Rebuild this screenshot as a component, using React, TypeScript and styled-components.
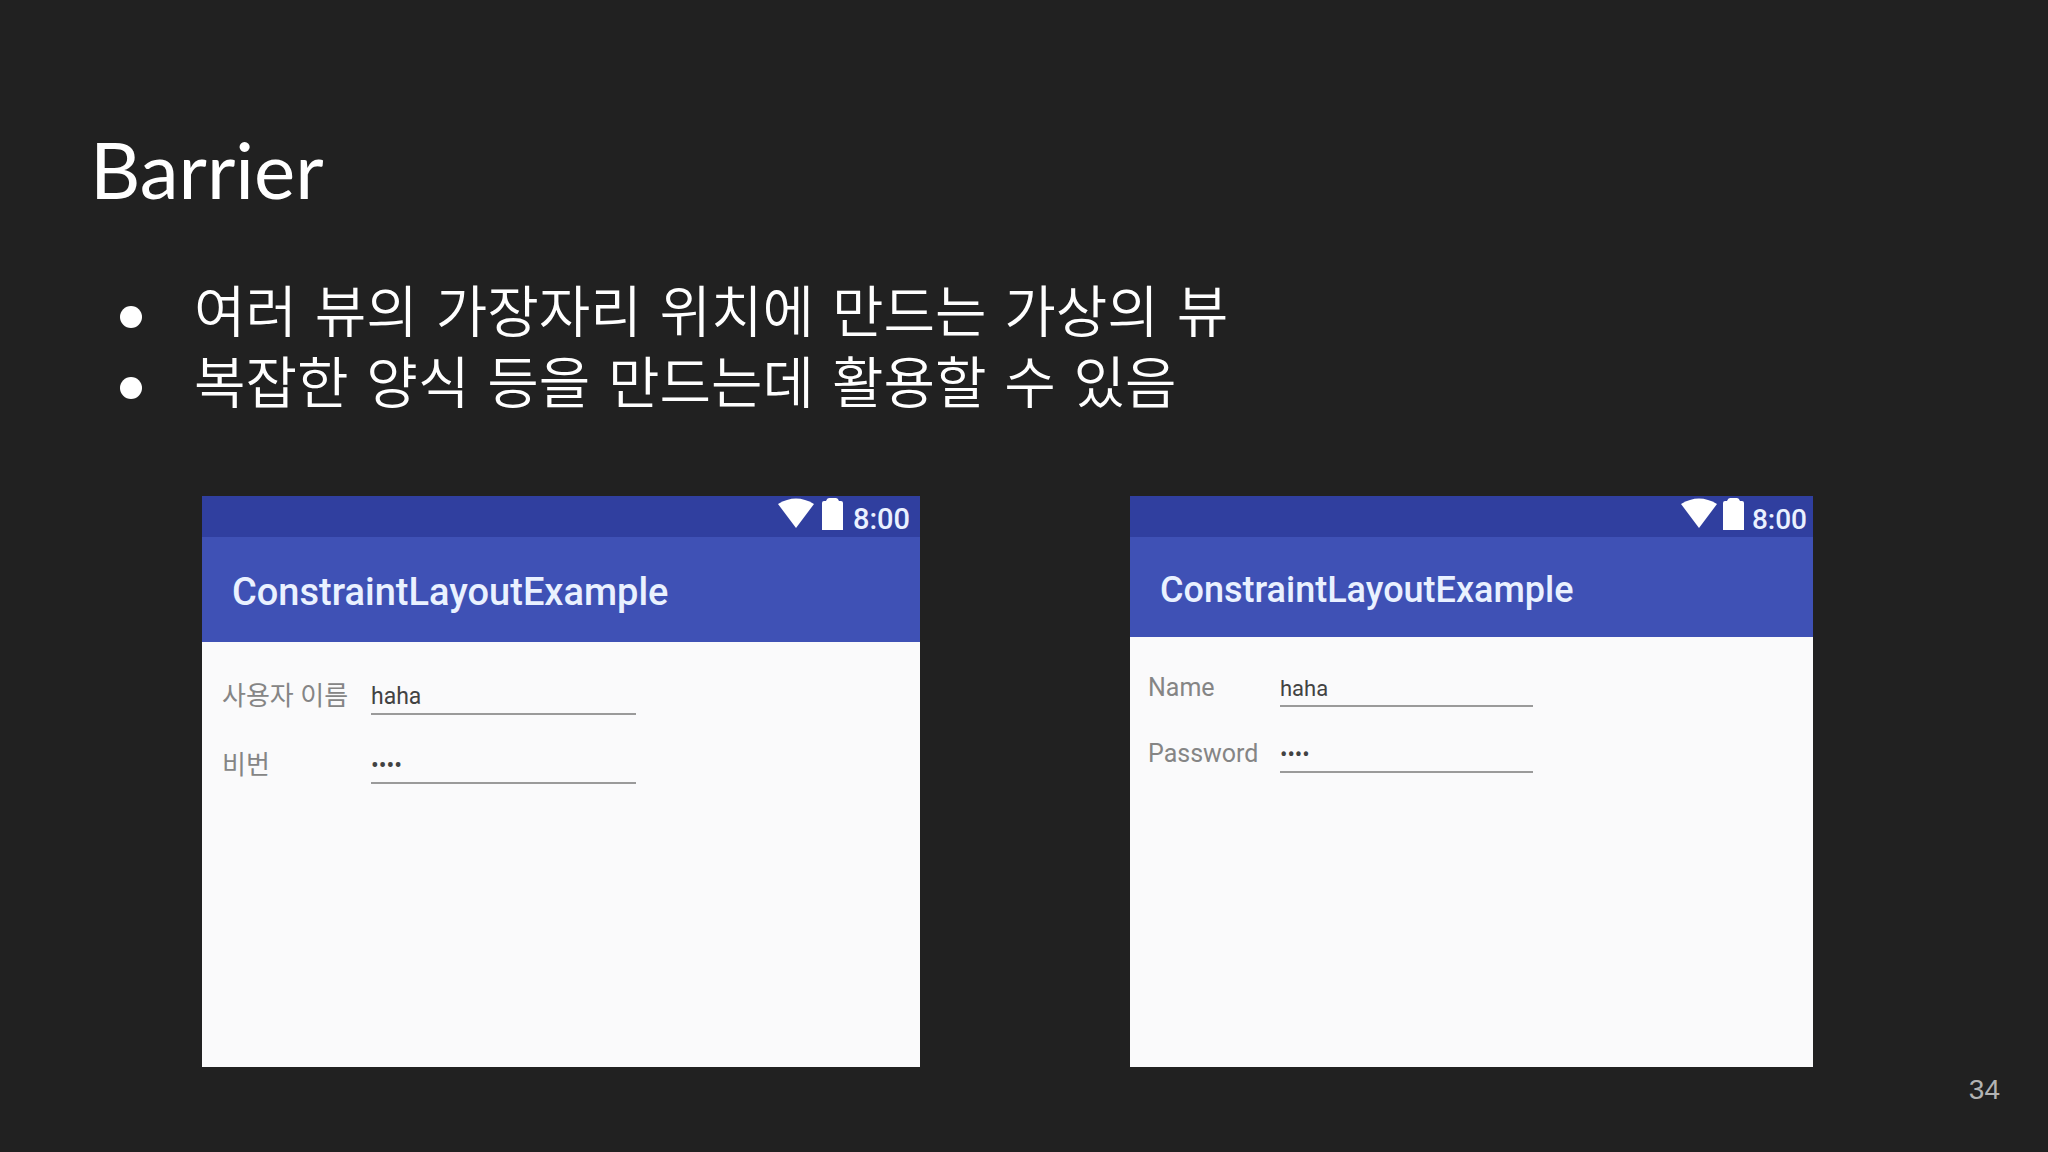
import React, { useId } from "react";
import styled, { createGlobalStyle } from "styled-components";

const GlobalStyle = createGlobalStyle`
  *, *::before, *::after { box-sizing: border-box; }
  body { margin: 0; background: #212121; }
`;

const Slide = styled.main`
  display: flex;
  flex-direction: column;
  min-height: 100vh;
  background: #212121;
  color: #ffffff;
  font-family: Roboto, "Noto Sans CJK KR", sans-serif;
`;

const Title = styled.h1`
  margin: 0;
  padding: 119px 90px 0;
  font: 400 78px/100px Lato, "Noto Sans CJK KR", sans-serif;
`;

const Points = styled.ul`
  margin: 0;
  padding: 58px 120px 0;
  list-style: none;
`;

const Point = styled.li`
  display: flex;
  align-items: center;
  gap: 52px;
  font: 350 56px/71px "DejaVu Sans", "Noto Sans CJK KR", sans-serif;

  &::before {
    content: "";
    flex: none;
    width: 22px;
    height: 22px;
    margin-top: 8px;
    border-radius: 50%;
    background: #ffffff;
  }
`;

const Figures = styled.section`
  flex: 1;
  display: grid;
  grid-template-columns: 718fr 683fr;
  gap: 210px;
  padding: 77px 235px 0 202px;
`;

const Phone = styled.article`
  display: flex;
  flex-direction: column;
  background: #fafafb;
`;

const StatusBar = styled.div<{ $end: number; $size: number; $gap: number }>`
  display: flex;
  align-items: flex-start;
  justify-content: flex-end;
  gap: ${(p) => p.$gap}px;
  height: 41px;
  padding: 2px ${(p) => p.$end}px 0 0;
  background: #303f9f;
  color: #eaf1ff;
  font-size: ${(p) => p.$size}px;
  font-weight: 500;
`;

const StatusIcon = styled.svg`
  display: block;
  flex: none;
  fill: #ffffff;
`;

const Clock = styled.time`
  margin-left: 2px;
  line-height: 43px;
`;

const AppBar = styled.header<{ $height: number; $size: number }>`
  display: flex;
  align-items: center;
  height: ${(p) => p.$height}px;
  padding: 5px 30px 0;
  background: #3f51b5;
  color: #eaf1ff;
  font-size: ${(p) => p.$size}px;
  font-weight: 500;
`;

const AppName = styled.h2`
  margin: 0;
  font: inherit;
  line-height: 48px;
`;

const Form = styled.form<{
  $labels: number;
  $fields: number;
  $row: number;
  $start: number;
}>`
  display: grid;
  grid-template-columns: ${(p) => p.$labels}px ${(p) => p.$fields}px;
  grid-auto-rows: ${(p) => p.$row}px;
  align-items: end;
  padding: 4px 0 0 ${(p) => p.$start}px;
`;

const Label = styled.label<{ $size: number }>`
  padding-bottom: 3px;
  color: #858585;
  font-size: ${(p) => p.$size}px;
  line-height: 32px;
`;

const Field = styled.input<{ $size: number }>`
  width: 100%;
  height: 34px;
  padding: 0 0 2px;
  border: 0;
  border-bottom: 2px solid #9a9a9a;
  border-radius: 0;
  outline: 0;
  background: transparent;
  color: #424242;
  font: 400 ${(p) => p.$size}px/28px Roboto, sans-serif;
`;

const Footer = styled.footer`
  display: flex;
  justify-content: flex-end;
  height: 85px;
  padding: 7px 48px 0;
  color: #b3b3b3;
  font: 400 28px/32px "Liberation Sans", sans-serif;
`;

type Example = {
  nameLabel: string;
  passwordLabel: string;
  bar: number;
  title: number;
  clock: number;
  end: number;
  gap: number;
  start: number;
  labels: number;
  fields: number;
  row: number;
  label: number;
  input: number;
};

const examples: Example[] = [
  {
    nameLabel: "사용자 이름",
    passwordLabel: "비번",
    bar: 105,
    title: 38,
    clock: 29,
    end: 10,
    gap: 8,
    start: 20,
    labels: 149,
    fields: 265,
    row: 69,
    label: 26,
    input: 23,
  },
  {
    nameLabel: "Name",
    passwordLabel: "Password",
    bar: 100,
    title: 36,
    clock: 28,
    end: 6,
    gap: 6,
    start: 18,
    labels: 132,
    fields: 253,
    row: 66,
    label: 25,
    input: 22,
  },
];

function ExamplePhone({ example: e }: { example: Example }) {
  const id = useId();
  return (
    <Phone>
      <StatusBar $end={e.end} $size={e.clock} $gap={e.gap}>
        <StatusIcon width="36" height="30" viewBox="0 0 36 30" aria-hidden="true">
          <path d="M0 6Q18-5 36 6L18 30Z" />
        </StatusIcon>
        <StatusIcon width="21" height="32" viewBox="0 0 21 32" aria-hidden="true">
          <path d="M7 0H14Q16 0 17 3H19Q21 3 21 5V32H0V5Q0 3 2 3H4Q5 0 7 0Z" />
        </StatusIcon>
        <Clock>8:00</Clock>
      </StatusBar>
      <AppBar $height={e.bar} $size={e.title}>
        <AppName>ConstraintLayoutExample</AppName>
      </AppBar>
      <Form $labels={e.labels} $fields={e.fields} $row={e.row} $start={e.start}>
        <Label htmlFor={`${id}-name`} $size={e.label}>
          {e.nameLabel}
        </Label>
        <Field id={`${id}-name`} type="text" defaultValue="haha" $size={e.input} />
        <Label htmlFor={`${id}-password`} $size={e.label}>
          {e.passwordLabel}
        </Label>
        <Field
          id={`${id}-password`}
          type="password"
          autoComplete="off"
          defaultValue="haha"
          $size={e.input}
        />
      </Form>
    </Phone>
  );
}

export default function App() {
  return (
    <>
      <GlobalStyle />
      <Slide lang="ko">
        <Title>Barrier</Title>
        <Points>
          <Point>여러 뷰의 가장자리 위치에 만드는 가상의 뷰</Point>
          <Point>복잡한 양식 등을 만드는데 활용할 수 있음</Point>
        </Points>
        <Figures>
          {examples.map((example) => (
            <ExamplePhone key={example.nameLabel} example={example} />
          ))}
        </Figures>
        <Footer>34</Footer>
      </Slide>
    </>
  );
}
